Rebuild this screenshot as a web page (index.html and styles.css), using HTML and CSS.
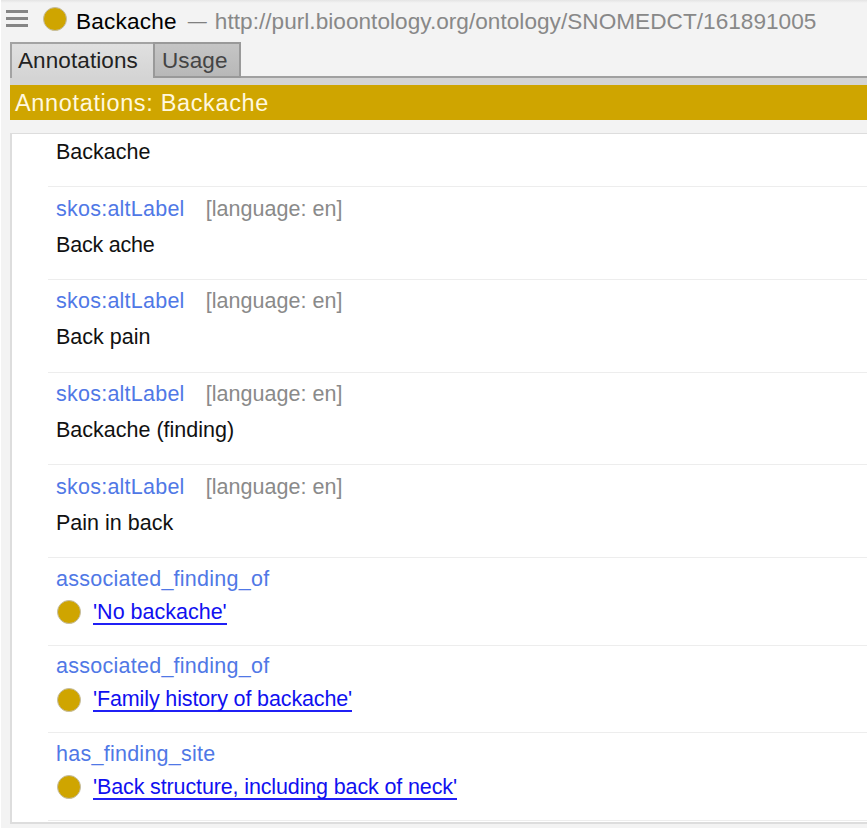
FILE: index.html
```
<!DOCTYPE html>
<html lang="en">
<head>
<meta charset="utf-8">
<title>Annotations: Backache</title>
<link rel="stylesheet" href="styles.css">
</head>
<body>
<main class="panel">
  <header class="title">
    <svg class="menu" width="22" height="20" viewBox="0 0 22 20"><path d="M0 2.5h22M0 9.5h22M0 16.5h22" stroke="#858585" stroke-width="3"/></svg>
    <span class="dot"></span>
    <span class="name">Backache</span>
    <span class="dash">—</span>
    <span class="iri">http://purl.bioontology.org/ontology/SNOMEDCT/161891005</span>
  </header>
  <nav class="tabs">
    <div class="tab active">Annotations</div>
    <div class="tab usage">Usage</div>
    <div class="rest"></div>
  </nav>
  <div class="strip"></div>
  <h1 class="heading">Annotations: Backache</h1>
  <section class="list">
    <div class="row first"><div class="value"><span>Backache</span></div></div>
    <div class="row"><div class="prop"><span class="alt">skos:altLabel</span><span class="lang">[language: en]</span></div><div class="value"><span class="tight">Back ache</span></div></div>
    <div class="row"><div class="prop"><span class="alt">skos:altLabel</span><span class="lang">[language: en]</span></div><div class="value"><span>Back pain</span></div></div>
    <div class="row"><div class="prop"><span class="alt">skos:altLabel</span><span class="lang">[language: en]</span></div><div class="value"><span>Backache (finding)</span></div></div>
    <div class="row"><div class="prop"><span class="alt">skos:altLabel</span><span class="lang">[language: en]</span></div><div class="value"><span>Pain in back</span></div></div>
    <div class="row rel"><div class="prop"><span class="object">associated_finding_of</span></div><div class="value"><span class="dot"></span><a class="link">'No backache'</a></div></div>
    <div class="row rel"><div class="prop"><span class="object">associated_finding_of</span></div><div class="value"><span class="dot"></span><a class="link long">'Family history of backache'</a></div></div>
    <div class="row rel"><div class="prop"><span class="object">has_finding_site</span></div><div class="value"><span class="dot"></span><a class="link long">'Back structure, including back of neck'</a></div></div>
  </section>
</main>
</body>
</html>
```
FILE: styles.css
```
* { box-sizing: border-box; }
body { margin: 0; font-family: "Liberation Sans", Arial, sans-serif; font-size: 21.5px; color: #111; background: #f3f3f3; overflow: hidden; }
.panel { height: 828px; border-left: 1px solid #fff; padding-left: 9px; background: linear-gradient(#e4e4e4, #f3f3f3 3px); white-space: nowrap; }
.title { height: 42px; display: flex; align-items: center; margin-left: -4px; font-size: 22.6px; }
.menu { flex: none; margin-bottom: 4px; }
.dot { flex: none; width: 24px; height: 24px; border-radius: 50%; background: #cfa500; border: 1px solid #c4bda5; }
.title .dot { margin: 0 0 4px 15px; }
.name { margin-left: 9px; color: #000; letter-spacing: .2px; padding-top: 1px; }
.dash { margin-left: 11px; width: 19px; font-size: 19px; color: #808080; }
.iri { margin-left: 8px; color: #888; letter-spacing: .03px; padding-top: 1px; }
.tabs { height: 36px; display: flex; line-height: 33px; font-size: 22.5px; }
.tab { height: 36px; border: 1px solid #999; border-width: 2px 1px 0 2px; border-color: #a3a3a3; letter-spacing: .1px; }
.active { width: 143px; padding-left: 6px; background: linear-gradient(#e0e0e0, #d4d4d4); color: #222; border-right: 0; }
.usage { width: 88px; padding-left: 7px; background: linear-gradient(#c5c5c5, #b8b8b8); color: #444; border-width: 2px 2px 2px 2px; border-color: #999; }
.rest { flex: 1; border-bottom: 2px solid #a0a0a0; }
.strip { height: 7px; background: #d4d4d4; }
.heading { margin: 0; height: 35px; padding-left: 5px; background: #cfa500; color: #fff8df; font-weight: 400; font-size: 23.5px; line-height: 36px; letter-spacing: .65px; }
.list { margin-top: 13px; height: 691px; background: #fff; border: solid #ddd; border-width: 1px 0 2px 2px; padding-left: 36px; overflow: hidden; }
.row { height: 92.8px; border-bottom: 1px solid #ededed; padding: 9px 0 0 8px; }
.first { height: 53px; padding-top: 5px; }
.rel { height: 87.5px; padding-top: 8px; }
.prop, .value { height: 26px; display: flex; align-items: center; }
.value { margin-top: 10px; letter-spacing: 0; }
.tight { letter-spacing: -.2px; }
.rel .value { margin-top: 7px; }
.first .value { margin-top: 0; }
.alt { color: #5078e6; letter-spacing: .24px; }
.lang { margin-left: 21px; color: #8a8a8a; letter-spacing: .05px; }
.object { color: #5078e6; letter-spacing: .26px; }
.rel .dot { margin-left: 1px; }
.link { margin-left: 12px; color: #1010f0; border-bottom: 2px solid #2020f5; line-height: 22px; margin-top: 1px; }
.long { letter-spacing: -.13px; }
```
